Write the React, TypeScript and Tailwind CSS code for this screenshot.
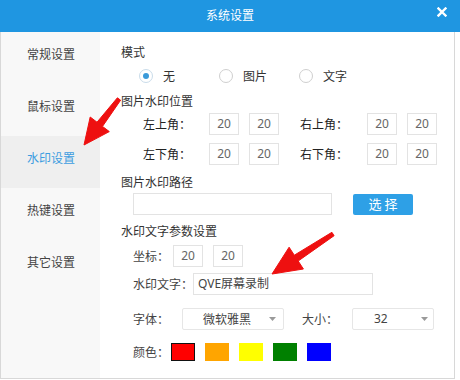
import React from "react";

type P = [number, number];

function arrowPoints(t: P, p: P, tw: number, bw: number, hl: number, hw: number): string {
  const dx = p[0] - t[0];
  const dy = p[1] - t[1];
  const len = Math.sqrt(dx * dx + dy * dy);
  const ux = dx / len;
  const uy = dy / len;
  const nx = -uy;
  const ny = ux;
  const bx = p[0] - ux * hl;
  const by = p[1] - uy * hl;
  const pts: P[] = [
    [t[0] + (nx * tw) / 2, t[1] + (ny * tw) / 2],
    [bx + (nx * bw) / 2, by + (ny * bw) / 2],
    [bx + (nx * hw) / 2, by + (ny * hw) / 2],
    [p[0], p[1]],
    [bx - (nx * hw) / 2, by - (ny * hw) / 2],
    [bx - (nx * bw) / 2, by - (ny * bw) / 2],
    [t[0] - (nx * tw) / 2, t[1] - (ny * tw) / 2],
  ];
  return pts.map((q) => `${q[0].toFixed(1)},${q[1].toFixed(1)}`).join(" ");
}

function NumBox({ v = "20" }: { v?: string }) {
  return (
    <div className="w-[30px] h-[22px] border border-[#e3e3e3] flex items-center justify-center text-[#666] text-[12px] font-['Noto_Sans','Noto_Sans_CJK_SC',sans-serif]">
      {v}
    </div>
  );
}

function Radio({ checked, label }: { checked?: boolean; label: string }) {
  return (
    <div className="w-[80px] flex items-center gap-[10px]">
      <div
        className={
          "w-[14px] h-[14px] rounded-full border flex items-center justify-center bg-white " +
          (checked ? "border-[#c9dcea]" : "border-[#cfcfcf]")
        }
      >
        {checked && <div className="w-[6px] h-[6px] rounded-full bg-[#3a9ad9]" />}
      </div>
      <span className="text-[#333]">{label}</span>
    </div>
  );
}

function Caret() {
  return (
    <svg width="7" height="4" viewBox="0 0 7 4">
      <polygon points="0,0 7,0 3.5,4" fill="#9a9a9a" />
    </svg>
  );
}

export default function App() {
  const items = ["常规设置", "鼠标设置", "水印设置", "热键设置", "其它设置"];
  return (
    <div className="relative w-[460px] h-[380px] bg-white overflow-hidden text-[12px] leading-[16px] text-[#333] font-['Noto_Sans_CJK_SC','Noto_Sans',sans-serif]">
      <div className="relative h-[32px] bg-[#1f96e1] flex items-center justify-center">
        <span className="text-white text-[12px] -mt-[2px]">系统设置</span>
        <svg className="absolute left-[437px] top-[7px]" width="10" height="10" viewBox="0 0 10 10">
          <path d="M1.5 1.5 L8.5 8.5 M8.5 1.5 L1.5 8.5" stroke="#ffffff" strokeWidth="2.4" strokeLinecap="square" />
        </svg>
      </div>
      <div className="flex w-[455px] h-[347px] border-x border-b border-[#d8d8d8]">
        <div className="w-[99px] h-full bg-[#f8f8f8] flex flex-col">
          {items.map((it, i) => (
            <div
              key={it}
              className={
                "h-[52px] pt-[14px] pl-[26px] " +
                (i === 2 ? "bg-[#efefef] text-[#3d9de0]" : "text-[#444]")
              }
            >
              {it}
            </div>
          ))}
        </div>
        <div className="flex-1 flex flex-col pl-[21px] pt-[12px]">
          <div className="h-[16px] flex items-center">模式</div>
          <div className="h-[16px] mt-[8px] ml-[18px] flex items-center">
            <Radio checked label="无" />
            <Radio label="图片" />
            <Radio label="文字" />
          </div>
          <div className="h-[16px] mt-[9px] flex items-center">图片水印位置</div>
          <div className="h-[22px] mt-[4px] ml-[22px] flex items-center">
            <span className="w-[66px] text-[#222]">左上角：</span>
            <div className="flex gap-[10px]">
              <NumBox />
              <NumBox />
            </div>
            <span className="ml-[21px] w-[67px] text-[#222]">右上角：</span>
            <div className="flex gap-[10px]">
              <NumBox />
              <NumBox />
            </div>
          </div>
          <div className="h-[22px] mt-[8px] ml-[22px] flex items-center">
            <span className="w-[66px] text-[#222]">左下角：</span>
            <div className="flex gap-[10px]">
              <NumBox />
              <NumBox />
            </div>
            <span className="ml-[21px] w-[67px] text-[#222]">右下角：</span>
            <div className="flex gap-[10px]">
              <NumBox />
              <NumBox />
            </div>
          </div>
          <div className="h-[16px] mt-[9px] flex items-center">图片水印路径</div>
          <div className="h-[22px] mt-[3px] ml-[12px] flex items-center">
            <div className="w-[199px] h-[22px] border border-[#e3e3e3]" />
            <div className="ml-[21px] w-[60px] h-[21px] rounded-[2px] bg-[#2ea0e6] text-white flex items-center justify-center text-[13px]">
              选 择
            </div>
          </div>
          <div className="h-[16px] mt-[8px] flex items-center">水印文字参数设置</div>
          <div className="h-[22px] mt-[6px] ml-[12px] flex items-center">
            <span className="w-[40px] text-[#444]">坐标：</span>
            <div className="flex gap-[10px]">
              <NumBox />
              <NumBox />
            </div>
          </div>
          <div className="h-[22px] mt-[6px] ml-[12px] flex items-center">
            <span className="w-[60px] text-[#444]">水印文字：</span>
            <div className="w-[180px] h-[22px] border border-[#e3e3e3] flex items-center pl-[4px] text-[#444] font-['Noto_Sans','Noto_Sans_CJK_SC',sans-serif]">
              QVE屏幕录制
            </div>
          </div>
          <div className="h-[22px] mt-[13px] ml-[12px] flex items-center">
            <span className="w-[49px] text-[#444]">字体：</span>
            <div className="w-[102px] h-[22px] border border-[#e6e6e6] rounded-[2px] flex items-center pl-[20px] pr-[7px] justify-between text-[#444]">
              <span>微软雅黑</span>
              <Caret />
            </div>
            <span className="ml-[18px] w-[50px] text-[#444]">大小：</span>
            <div className="w-[82px] h-[22px] border border-[#e6e6e6] rounded-[2px] flex items-center pl-[21px] pr-[5px] justify-between text-[#444] font-['Noto_Sans','Noto_Sans_CJK_SC',sans-serif]">
              <span>32</span>
              <Caret />
            </div>
          </div>
          <div className="h-[18px] mt-[13px] ml-[12px] flex items-center">
            <span className="w-[38px] text-[#444]">颜色：</span>
            <div className="flex gap-[10px]">
              <div className="w-[24px] h-[18px] bg-[#ff0000] border border-[#111]" />
              <div className="w-[24px] h-[18px] bg-[#ffa500]" />
              <div className="w-[24px] h-[18px] bg-[#ffff00]" />
              <div className="w-[24px] h-[18px] bg-[#008000]" />
              <div className="w-[24px] h-[18px] bg-[#0000ff]" />
            </div>
          </div>
        </div>
      </div>
      <svg className="absolute left-0 top-0 pointer-events-none" width="460" height="380" viewBox="0 0 460 380">
        <polygon points={arrowPoints([119, 99], [84, 145], 4, 7, 26, 24)} fill="#ee1010" strokeLinejoin="round" stroke="#ee1010" strokeWidth="1" />
        <polygon points={arrowPoints([333, 234], [272, 274], 4, 7, 29, 26)} fill="#ee1010" strokeLinejoin="round" stroke="#ee1010" strokeWidth="1" />
      </svg>
    </div>
  );
}
